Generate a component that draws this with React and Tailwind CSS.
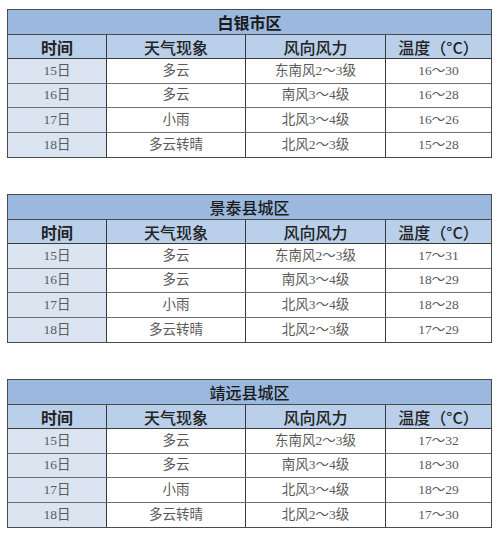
const tables = [
  {
    title: "白银市区",
    titleBold: true,
    rows: [
      ["15日", "多云", "东南风2～3级", "16～30"],
      ["16日", "多云", "南风3～4级", "16～28"],
      ["17日", "小雨", "北风3～4级", "16～26"],
      ["18日", "多云转晴", "北风2～3级", "15～28"],
    ],
  },
  {
    title: "景泰县城区",
    rows: [
      ["15日", "多云", "东南风2～3级", "17～31"],
      ["16日", "多云", "南风3～4级", "18～29"],
      ["17日", "小雨", "北风3～4级", "18～28"],
      ["18日", "多云转晴", "北风2～3级", "17～29"],
    ],
  },
  {
    title: "靖远县城区",
    rows: [
      ["15日", "多云", "东南风2～3级", "17～32"],
      ["16日", "多云", "南风3～4级", "18～30"],
      ["17日", "小雨", "北风3～4级", "18～29"],
      ["18日", "多云转晴", "北风2～3级", "17～30"],
    ],
  },
];

const headers = ["时间", "天气现象", "风向风力", "温度（°C）"];
const widths = ["w-[99px]", "w-[139px]", "w-[140px]", "w-[105px]"];

const serif = { fontFamily: '"Liberation Serif", "Noto Sans CJK SC", serif' };

const WeatherTable = ({ title, titleBold, rows }) => {
  return (
    <div className="w-[485px] border border-[#4a4a4a]">
      <div
        className={`h-[25px] flex items-center justify-center bg-[#9bb9df] border-b border-[#4a4a4a] text-[16px] text-[#1a1a1a] ${
          titleBold ? "font-bold" : "font-medium"
        }`}
      >
        {title}
      </div>
      <div className="flex h-[24px] bg-[#b9cfea] border-b border-[#3a3a3a]">
        {headers.map((h, i) => (
          <div
            key={h}
            className={`${widths[i]} flex items-center justify-center text-[16px] text-[#222] ${
              i < 3 ? "border-r border-[#3a3a3a]" : ""
            } ${i === 0 ? "font-semibold" : "font-medium"}`}
          >
            {h}
          </div>
        ))}
      </div>
      {rows.map((r, ri) => (
        <div
          key={ri}
          className={`flex h-[24.5px] ${ri < 3 ? "border-b border-[#6f6f6f]" : ""}`}
        >
          {r.map((c, ci) => (
            <div
              key={ci}
              style={serif}
              className={`${widths[ci]} flex items-center justify-center text-[13.5px] text-[#5a5a5a] ${
                ci < 3 ? "border-r border-[#3a3a3a]" : ""
              } ${ci === 0 ? "bg-[#dbe5f1]" : "bg-white"}`}
            >
              {c}
            </div>
          ))}
        </div>
      ))}
    </div>
  );
};

export default function App() {
  return (
    <div
      className="w-[500px] h-[555px] bg-white pt-[9px] pl-[7px] flex flex-col gap-[36px]"
      style={{ fontFamily: '"Noto Sans CJK SC", "Noto Sans", sans-serif' }}
    >
      {tables.map((t) => (
        <WeatherTable key={t.title} {...t} />
      ))}
    </div>
  );
}
